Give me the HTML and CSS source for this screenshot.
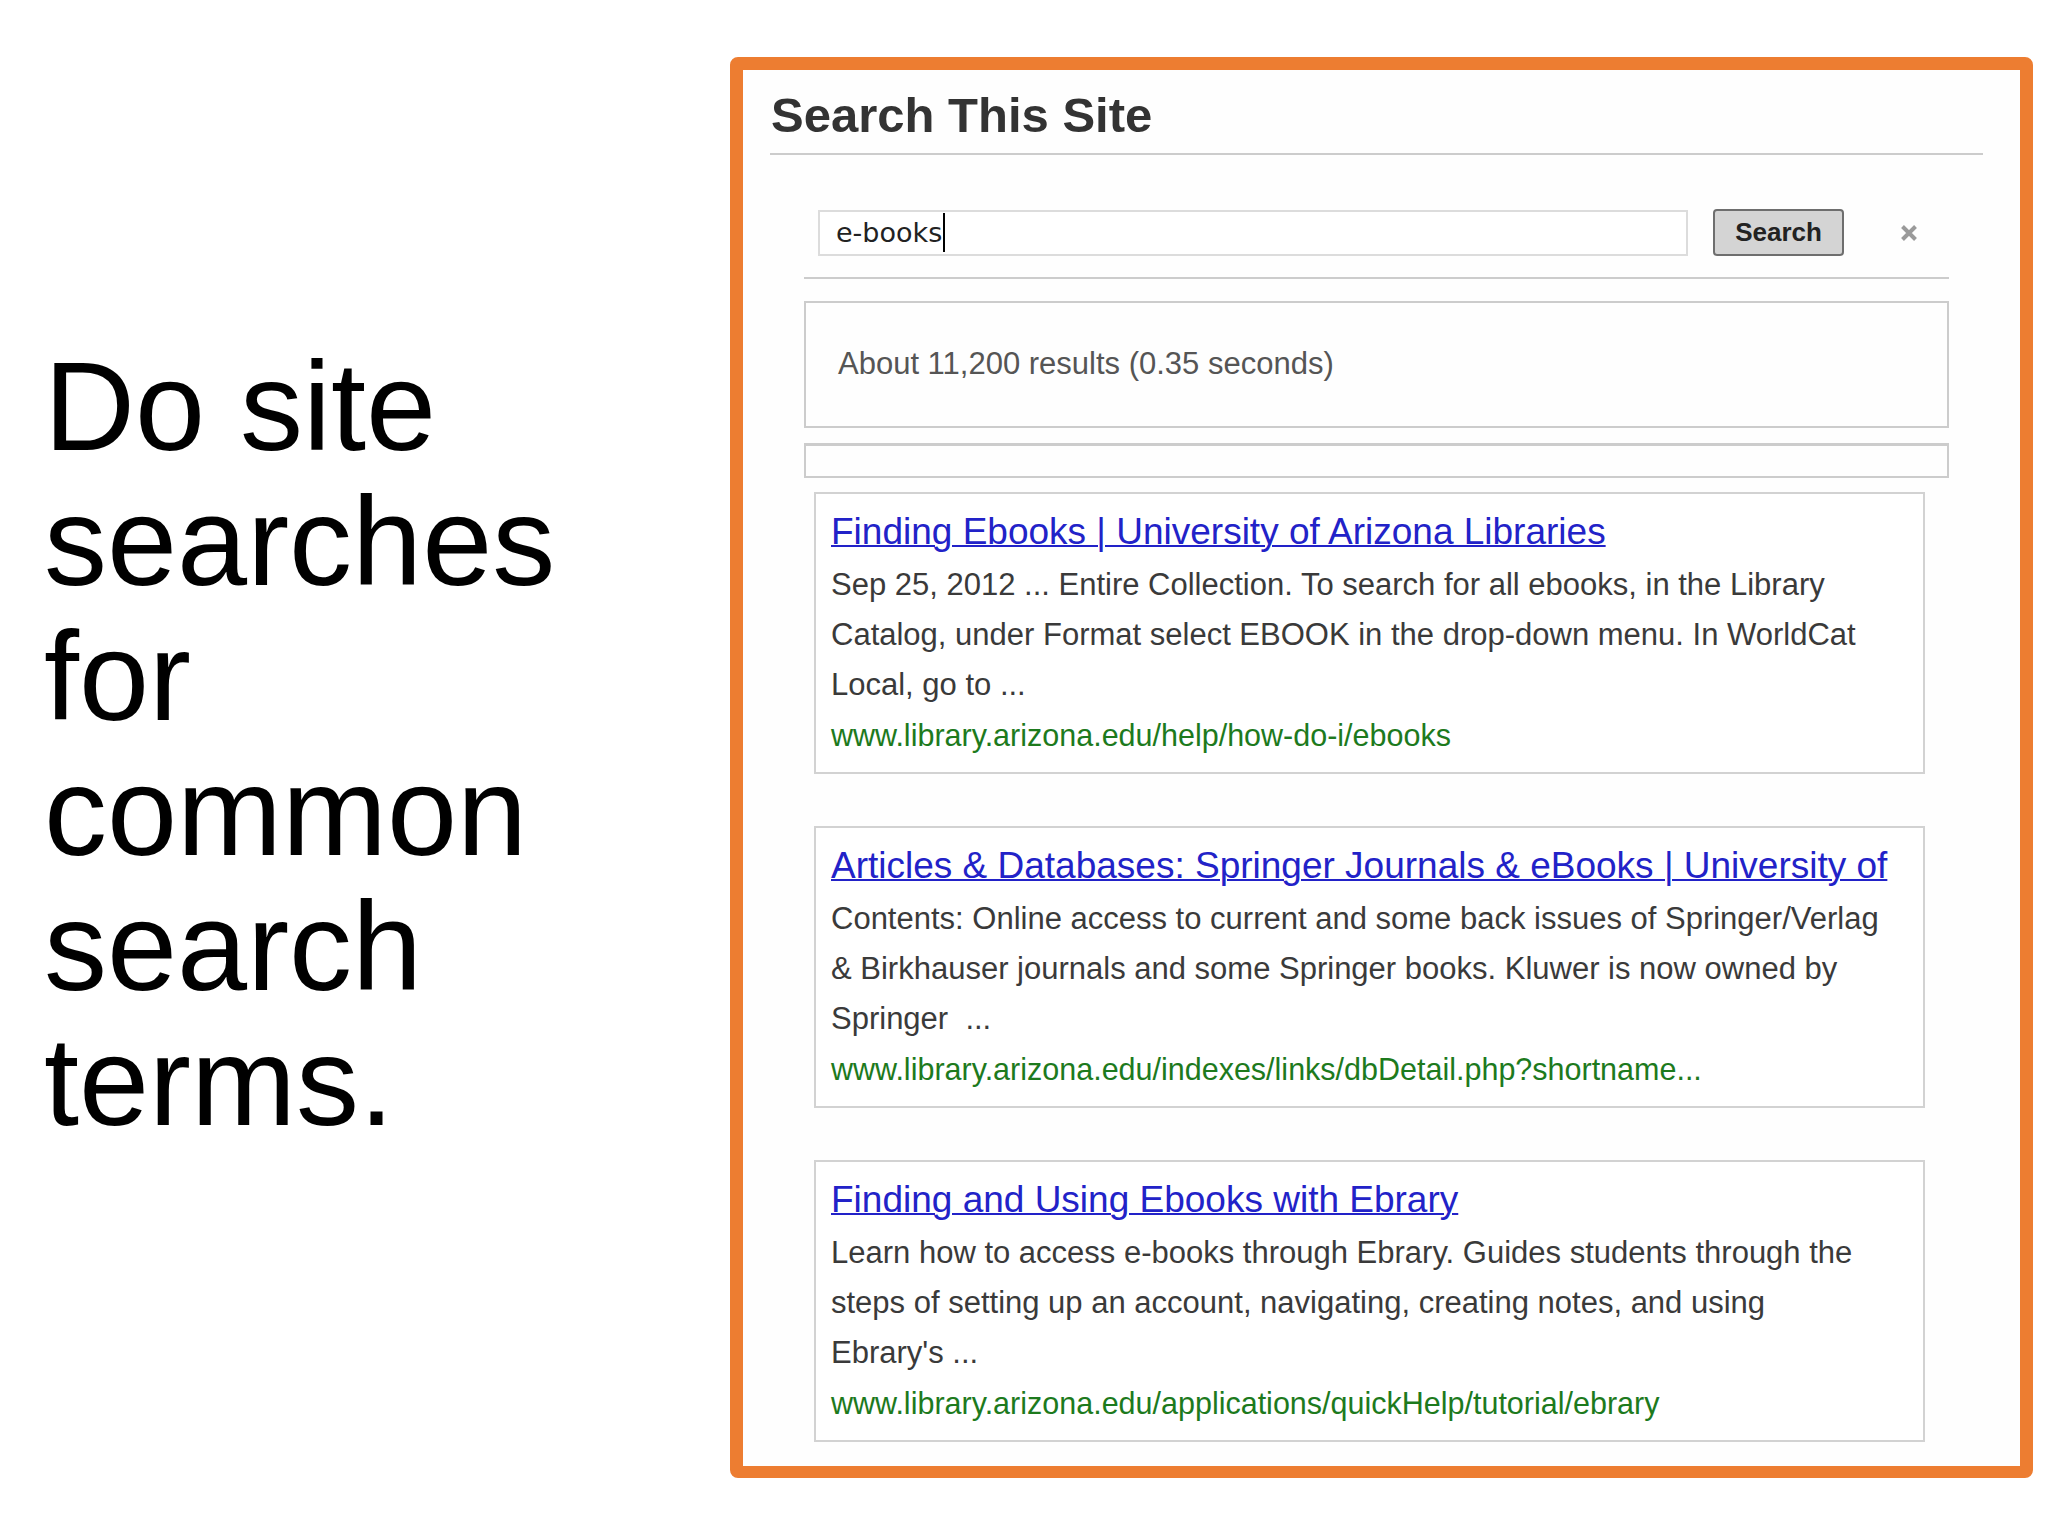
FILE: index.html
```html
<!DOCTYPE html>
<html lang="en">
<head>
<meta charset="utf-8">
<title>Do site searches for common search terms</title>
<link rel="stylesheet" href="styles.css">
</head>
<body>
<div class="slide">
  <div class="left">
    <p class="bigtext">Do site<br>searches<br>for<br>common<br>search<br>terms.</p>
  </div>
  <div class="panel">
    <h1 class="title">Search This Site</h1>
    <div class="searchrow">
      <div class="input"><span class="query">e-books</span><span class="caret"></span></div>
      <button class="btn">Search</button>
      <span class="close"><svg width="18" height="18" viewBox="0 0 18 18"><path d="M2.5 2.5 L15.5 15.5 M15.5 2.5 L2.5 15.5" stroke="#9a9a9a" stroke-width="4" stroke-linecap="butt"/></svg></span>
    </div>
    <div class="info">About 11,200 results (0.35 seconds)</div>
    <div class="blank"></div>
    <div class="results">
      <div class="card">
        <a class="link" href="#">Finding Ebooks | University of Arizona Libraries</a>
        <p class="snippet">Sep 25, 2012 ... Entire Collection. To search for all ebooks, in the Library<br>Catalog, under Format select EBOOK in the drop-down menu. In WorldCat<br>Local, go to ...</p>
        <p class="url">www.library.arizona.edu/help/how-do-i/ebooks</p>
      </div>
      <div class="card">
        <a class="link" href="#">Articles &amp; Databases: Springer Journals &amp; eBooks | University of</a>
        <p class="snippet">Contents: Online access to current and some back issues of Springer/Verlag<br>&amp; Birkhauser journals and some Springer books. Kluwer is now owned by<br>Springer &nbsp;...</p>
        <p class="url">www.library.arizona.edu/indexes/links/dbDetail.php?shortname...</p>
      </div>
      <div class="card">
        <a class="link" href="#">Finding and Using Ebooks with Ebrary</a>
        <p class="snippet">Learn how to access e-books through Ebrary. Guides students through the<br>steps of setting up an account, navigating, creating notes, and using<br>Ebrary's ...</p>
        <p class="url">www.library.arizona.edu/applications/quickHelp/tutorial/ebrary</p>
      </div>
    </div>
  </div>
</div>
</body>
</html>
```

FILE: styles.css
```css
html, body {
  margin: 0;
  padding: 0;
  background: #ffffff;
}

body {
  width: 2048px;
  height: 1536px;
  overflow: hidden;
  font-family: "Liberation Sans", Arial, sans-serif;
}

.slide {
  display: flex;
  align-items: flex-start;
  width: 2048px;
  height: 1536px;
}

.left {
  flex: none;
  width: 730px;
}

.bigtext {
  margin: 0;
  padding: 339px 0 0 44px;
  font-family: "Liberation Sans", Arial, sans-serif;
  font-size: 126px;
  line-height: 135px;
  color: #000;
}

.panel {
  flex: none;
  box-sizing: border-box;
  margin-top: 57px;
  width: 1303px;
  height: 1421px;
  border: 13px solid #ed7d31;
  border-bottom-width: 12px;
  border-radius: 8px;
  padding-top: 17px;
  background: #fefefe;
}

.title {
  margin: 0 37px 0 27px;
  padding: 0 0 10px 1px;
  font-family: "Liberation Sans", Arial, sans-serif;
  font-weight: bold;
  font-size: 49px;
  line-height: 56px;
  color: #333;
  border-bottom: 2px solid #cccccc;
}

.searchrow {
  display: flex;
  align-items: center;
  margin: 0 71px 0 61px;
  padding: 54px 0 21px 14px;
  border-bottom: 2px solid #cccccc;
}

.input {
  box-sizing: border-box;
  display: flex;
  align-items: center;
  width: 870px;
  height: 46px;
  border: 2px solid #dcdcdc;
  padding-left: 16px;
  background: #fff;
}

.query {
  font-family: "DejaVu Sans", Verdana, sans-serif;
  font-size: 27px;
  color: #222;
}

.caret {
  display: inline-block;
  width: 2px;
  height: 39px;
  background: #000;
  margin-left: 1px;
}

.btn {
  box-sizing: border-box;
  margin-left: 25px;
  width: 131px;
  height: 47px;
  padding: 0;
  border: 2px solid #6e6e6e;
  border-radius: 4px;
  background: #d4d4d4;
  font-family: "Liberation Sans", Arial, sans-serif;
  font-weight: bold;
  font-size: 26px;
  color: #222;
}

.close {
  display: flex;
  margin-left: 56px;
  width: 18px;
  height: 18px;
}

.info {
  margin: 22px 71px 0 61px;
  padding: 36px 0 37px 32px;
  border: 2px solid #cccccc;
  font-size: 31px;
  line-height: 50px;
  color: #555;
}

.blank {
  box-sizing: border-box;
  margin: 15px 71px 0 61px;
  height: 35px;
  border: 2px solid #cccccc;
  border-top-width: 3px;
}

.results {
  display: flex;
  flex-direction: column;
  gap: 52px;
  margin: 14px 95px 0 71px;
}

.card {
  border: 2px solid #d2d2d2;
  padding: 13px 15px 12px;
  background: #fff;
}

.link {
  display: block;
  font-size: 37px;
  line-height: 50px;
  color: #2222c8;
  text-decoration: underline;
  text-decoration-thickness: 2px;
  white-space: nowrap;
}

.snippet {
  margin: 0;
  padding-top: 3px;
  font-size: 31px;
  line-height: 50px;
  color: #3a3a3a;
  white-space: nowrap;
}

.url {
  margin: 0;
  font-size: 30.5px;
  line-height: 50px;
  color: #1d7a1d;
  white-space: nowrap;
}
```
